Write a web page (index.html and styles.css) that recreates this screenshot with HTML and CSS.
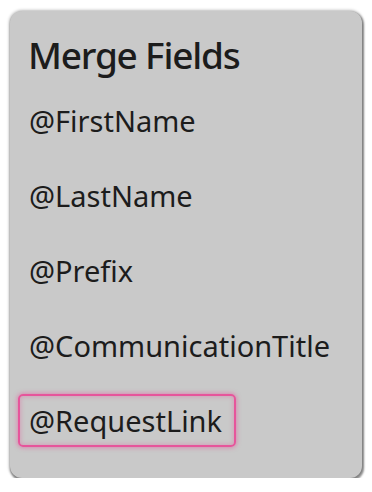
FILE: index.html
```html
<!DOCTYPE html>
<html>
<head>
<meta charset="utf-8">
<link rel="stylesheet" href="styles.css">
</head>
<body>
<div class="panel">
  <h1 class="title">Merge Fields</h1>
  <ul class="fields">
    <li class="field">@FirstName</li>
    <li class="field">@LastName</li>
    <li class="field">@Prefix</li>
    <li class="field">@CommunicationTitle</li>
    <li class="field selected">@RequestLink</li>
  </ul>
</div>
</body>
</html>
```
FILE: styles.css
```css
html, body {
  margin: 0;
  padding: 0;
  background: #ffffff;
}
body {
  padding: 11px 10px 0 10px;
  font-family: "Noto Sans", sans-serif;
  color: #1c1c1c;
}
.panel {
  width: 352px;
  height: 467px;
  box-sizing: border-box;
  background: #c9c9c9;
  border-radius: 12px;
  box-shadow: 1px 2px 2px 1px rgba(0,0,0,0.4), 0 0 3px 1px rgba(0,0,0,0.25);
  padding: 22px 8px 0 8px;
}
.title {
  margin: 0 0 0 10px;
  font-size: 37px;
  font-weight: 500;
  letter-spacing: -1.2px;
  line-height: 44px;
  height: 61px;
}
.fields {
  list-style: none;
  margin: 0;
  padding: 0;
  display: flex;
  flex-direction: column;
  align-items: flex-start;
  gap: 22px;
}
.field {
  box-sizing: border-box;
  height: 53px;
  display: flex;
  align-items: center;
  padding: 0 12px 0 9px;
  border: 2px solid transparent;
  border-radius: 5px;
  font-size: 29px;
}
.selected {
  border-color: #e6559b;
  box-shadow: 0 0 4px 1px rgba(230, 85, 155, 0.55), inset 0 0 4px 1px rgba(230, 85, 155, 0.35);
}
```
